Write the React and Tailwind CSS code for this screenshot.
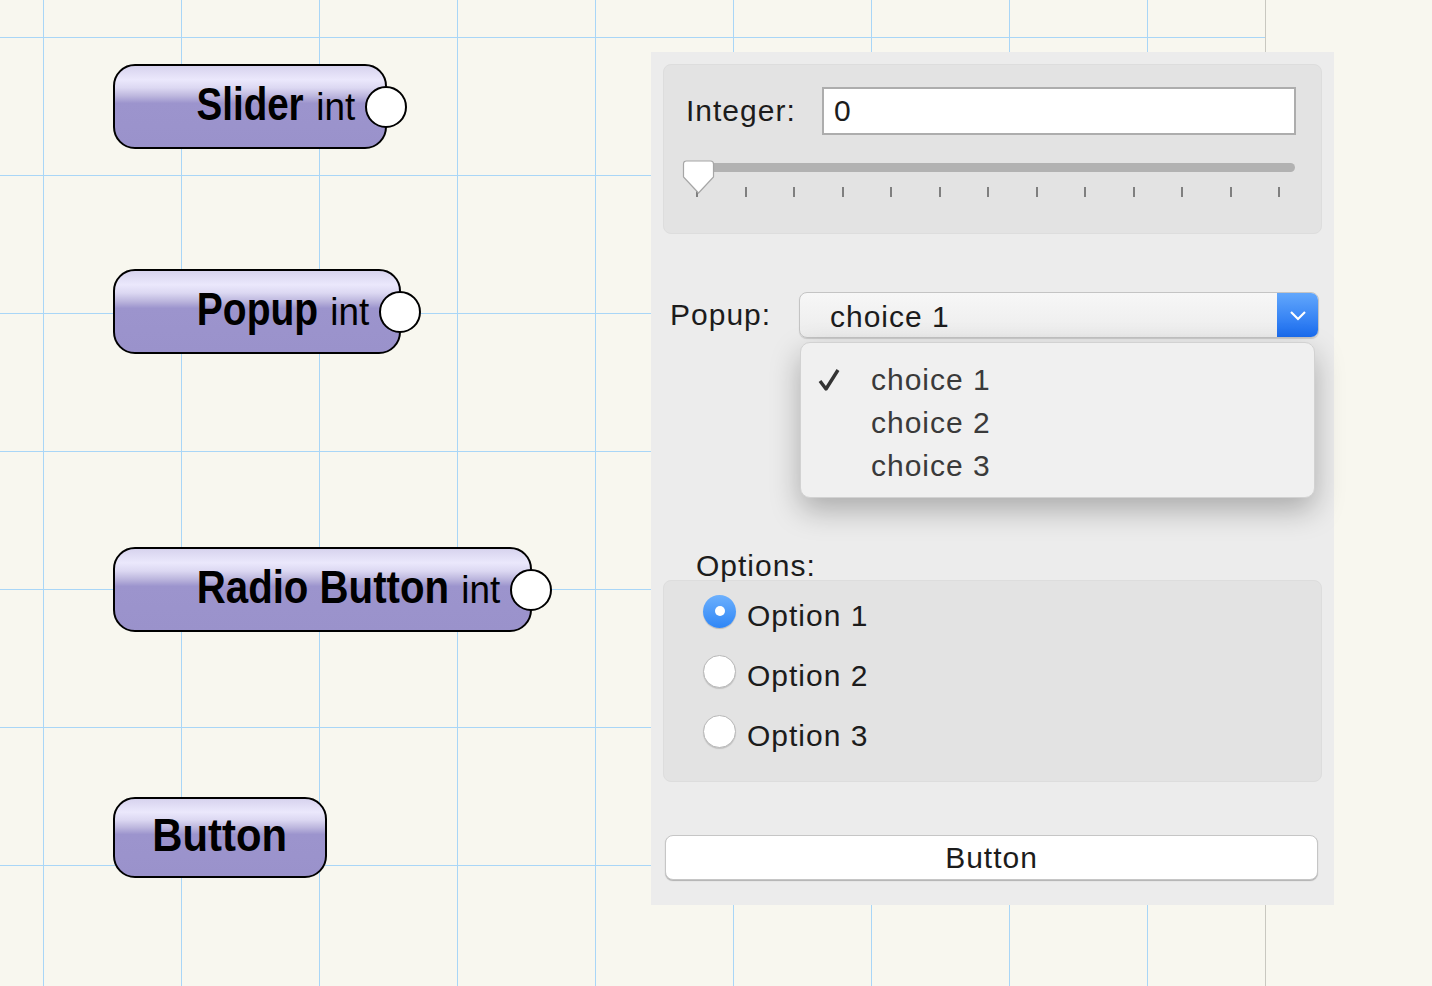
import React from 'react'

const nodeText = "font-['Liberation_Sans',Arial,sans-serif]"
const uiText = "font-['Liberation_Sans',Arial,sans-serif]"

function Node({ className, port, children }) {
  return (
    <div
      className={`absolute rounded-[22px] border-2 border-black bg-[linear-gradient(to_bottom,#d7d3ee_0%,#ebe8fc_17%,#dcd8f2_27%,#bdb7de_37%,#9c94cd_46%,#9a92cb_100%)] ${className}`}
    >
      <div className={`flex h-full items-center pb-[7px] text-black ${nodeText}`}>{children}</div>
      {port && (
        <span className="absolute -right-[22px] top-1/2 h-[42px] w-[42px] -translate-y-1/2 rounded-full border-2 border-black bg-white" />
      )}
    </div>
  )
}

// the node font is a condensed bold face, so squeeze the name horizontally
function NodeLabel({ name, squeeze }) {
  return (
    <div className="flex w-full items-baseline justify-end pr-[30px]">
      <span className={`inline-block origin-right text-[47px] font-bold leading-none ${squeeze}`}>{name}</span>
      <span className="ml-[11px] inline-block origin-right scale-x-[0.97] text-[38px] leading-none">int</span>
    </div>
  )
}

function Radio({ checked, label }) {
  return (
    <div className="flex h-[60px] items-center">
      {checked ? (
        <span className="flex h-[33px] w-[33px] -translate-y-[4px] items-center justify-center rounded-full bg-[linear-gradient(to_bottom,#6cb0fd,#2f86f6)] shadow-[0_1px_1px_rgba(0,0,0,0.2)]">
          <span className="h-[10px] w-[10px] rounded-full bg-white" />
        </span>
      ) : (
        <span className="h-[33px] w-[33px] -translate-y-[4px] rounded-full border border-[#b8b8b8] bg-white shadow-[0_1px_1px_rgba(0,0,0,0.15)]" />
      )}
      <span className="ml-[11px]">{label}</span>
    </div>
  )
}

export default function App() {
  const ticks = Array.from({ length: 13 })

  return (
    <div className="relative h-[986px] w-[1432px] overflow-hidden bg-[#f8f7ef]">
      {/* Canvas grid */}
      <div className="absolute left-0 top-0 h-full w-[1266px] border-r border-[#c9c8c0]">
        <svg width="1265" height="986" className="block" shapeRendering="crispEdges">
          <defs>
            <pattern id="grid" x="43" y="37" width="138" height="138" patternUnits="userSpaceOnUse">
              <rect x="0" y="0" width="1" height="138" fill="#a9d6f7" />
              <rect x="0" y="0" width="138" height="1" fill="#a9d6f7" />
            </pattern>
          </defs>
          <rect width="100%" height="100%" fill="url(#grid)" />
        </svg>
      </div>

      {/* Nodes */}
      <Node className="left-[113px] top-[64px] h-[85px] w-[274px]" port>
        <NodeLabel name="Slider" squeeze="scale-x-[0.82]" />
      </Node>
      <Node className="left-[113px] top-[269px] h-[85px] w-[288px]" port>
        <NodeLabel name="Popup" squeeze="scale-x-[0.83]" />
      </Node>
      <Node className="left-[113px] top-[547px] h-[85px] w-[419px]" port>
        <NodeLabel name="Radio Button" squeeze="scale-x-[0.855]" />
      </Node>
      <Node className="left-[113px] top-[797px] h-[81px] w-[214px]">
        <div className="flex w-full justify-center">
          <span className="inline-block origin-center scale-x-[0.89] text-[47px] font-bold leading-none">Button</span>
        </div>
      </Node>

      {/* Inspector panel */}
      <div className={`absolute left-[651px] top-[52px] h-[853px] w-[683px] bg-[#ececec] px-[12px] pt-[12px] text-[30px] tracking-[1px] text-[#1c1c1c] ${uiText}`}>
        {/* Integer group */}
        <div className="h-[170px] rounded-[8px] border border-[#dddddd] bg-[#e3e3e3] pl-[22px] pr-[25px] pt-[22px]">
          <div className="flex items-center">
            <span className="w-[136px] leading-none">Integer:</span>
            <div className="flex h-[48px] flex-1 items-center border-2 border-[#adadad] bg-white pl-[10px] leading-none">0</div>
          </div>
          <div className="relative -ml-[3px] mt-[24px] h-[40px] w-[612px]">
            <div className="absolute left-0 right-0 top-[4px] h-[9px] rounded-full bg-[#b2b2b2]" />
            <div className="absolute left-[13px] right-[15px] top-[28px] flex h-[10px] justify-between">
              {ticks.map((_, i) => (
                <span key={i} className="h-[10px] w-[2px] bg-[#7f7f7f]" />
              ))}
            </div>
            <svg className="absolute -left-px top-px" width="33" height="36" viewBox="0 0 33 36">
              <path
                d="M4.5 1 H28.5 Q31.5 1 31.5 4 V17 L16.5 33 L1.5 17 V4 Q1.5 1 4.5 1 Z"
                fill="#ffffff"
                stroke="#a6a6a6"
                strokeWidth="1.2"
              />
            </svg>
          </div>
        </div>

        {/* Popup row */}
        <div className="relative mt-[58px] flex h-[46px] items-center pl-[7px]">
          <span className="w-[129px] leading-none">Popup:</span>
          <div className="flex h-[46px] w-[520px] overflow-hidden rounded-[8px] border border-[#c4c4c4] bg-[linear-gradient(to_bottom,#f7f7f7,#ececec)] shadow-[0_1px_1px_rgba(0,0,0,0.15)]">
            <span className="flex flex-1 items-center pl-[30px] pt-[3px] leading-none">choice 1</span>
            <span className="flex w-[41px] items-center justify-center bg-[linear-gradient(to_bottom,#62a7fc,#1a6cef)]">
              <svg width="18" height="11" viewBox="0 0 18 11">
                <polyline points="2,2 9,9 16,2" fill="none" stroke="#ffffff" strokeWidth="2.2" />
              </svg>
            </span>
          </div>

          {/* Open popup menu */}
          <div className="absolute left-[137px] top-[50px] z-10 h-[156px] w-[515px] rounded-[10px] border border-[#d2d2d2] bg-[#f0f0f0] pt-[15px] text-[#3a3a3a] shadow-[0_12px_30px_rgba(0,0,0,0.28)]">
            {['choice 1', 'choice 2', 'choice 3'].map((c, i) => (
              <div key={c} className="flex h-[43px] items-center">
                <span className="flex w-[70px] justify-center pr-[14px]">
                  {i === 0 && (
                    <svg width="22" height="24" viewBox="0 0 22 24">
                      <path d="M2 13 L8 21 L20 2" fill="none" stroke="#333333" strokeWidth="3.4" strokeLinejoin="round" />
                    </svg>
                  )}
                </span>
                <span className="leading-none">{c}</span>
              </div>
            ))}
          </div>
        </div>

        {/* Options group */}
        <div className="ml-[33px] mt-[214px] h-[28px] leading-[28px]">Options:</div>
        <div className="h-[202px] rounded-[8px] border border-[#dddddd] bg-[#e3e3e3] pl-[39px] pt-[4px]">
          <Radio checked label="Option 1" />
          <Radio label="Option 2" />
          <Radio label="Option 3" />
        </div>

        <button className="ml-[2px] mt-[53px] flex h-[45px] w-[653px] items-center justify-center rounded-[8px] border border-[#c6c6c6] bg-white leading-none tracking-[1px] text-[#1c1c1c] shadow-[0_1px_1px_rgba(0,0,0,0.25)]">
          Button
        </button>
      </div>
    </div>
  )
}
